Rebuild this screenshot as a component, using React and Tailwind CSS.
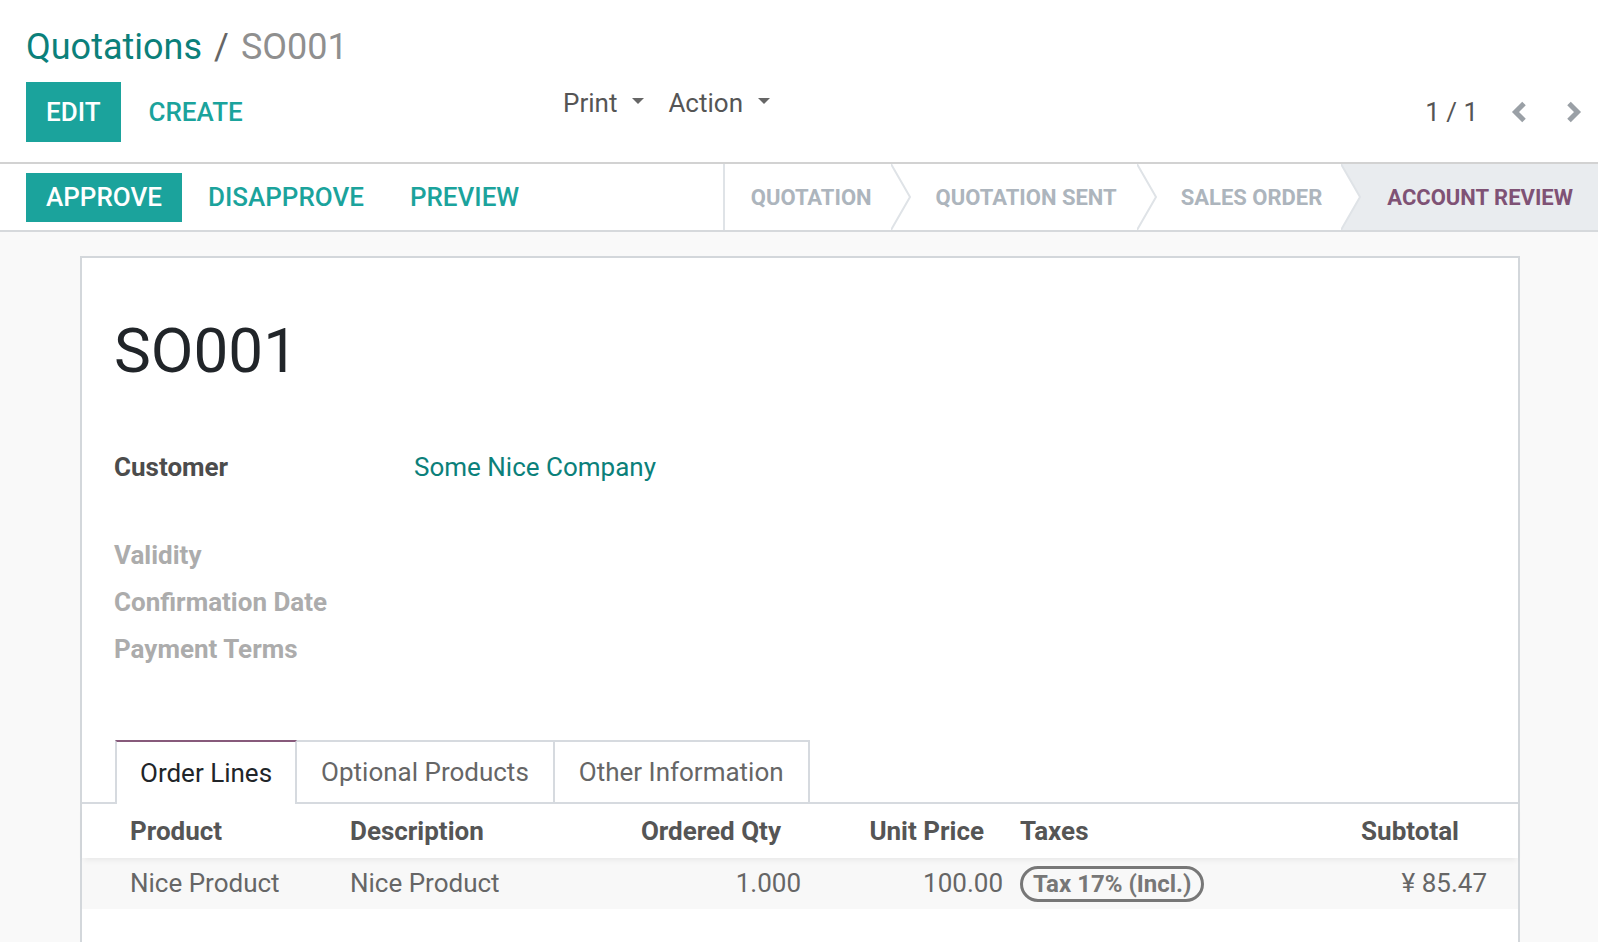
import React from "react";

function Caret() {
  return (
    <svg width="12" height="6" viewBox="0 0 12 6" className="mb-[5px]">
      <polygon points="0,0 12,0 6,6" fill="#666" />
    </svg>
  );
}

function ChevronLeft() {
  return (
    <svg width="16" height="22" viewBox="0 0 16 22">
      <polyline points="13,2.5 4.5,11 13,19.5" fill="none" stroke="#9aa0a6" strokeWidth="5" strokeLinejoin="miter" />
    </svg>
  );
}

function ChevronRight() {
  return (
    <svg width="16" height="22" viewBox="0 0 16 22">
      <polyline points="3,2.5 11.5,11 3,19.5" fill="none" stroke="#9aa0a6" strokeWidth="5" strokeLinejoin="miter" />
    </svg>
  );
}

function Arrow() {
  return (
    <svg
      className="absolute left-full top-0 z-10 h-full w-[20px]"
      viewBox="0 0 20 66"
      preserveAspectRatio="none"
    >
      <polygon points="0,0 19,33 0,66" fill="#ffffff" />
      <polyline points="0,0 19,33 0,66" fill="none" stroke="#dfe3e7" strokeWidth="2" />
    </svg>
  );
}

export default function App() {
  return (
    <div className="h-[942px] overflow-hidden bg-[#f9f9f9] font-[family-name:Roboto,_sans-serif]">
      {/* Control panel */}
      <div className="bg-white border-b-2 border-[#d2d2d2] pl-[26px] pr-[16px] pt-[26px] pb-[20px]">
        <div className="h-[42px] leading-[42px] text-[36px] whitespace-nowrap">
          <span className="text-[#0b807a]">Quotations</span>
          <span className="text-[#666666] px-[12px]">/</span>
          <span className="text-[#8f8f8f]">SO001</span>
        </div>
        <div className="mt-[14px] h-[60px] flex items-start">
          <div className="w-[537px] flex gap-2">
            <button className="h-[60px] px-5 bg-[#1ba39c] text-white text-[26px] font-medium">EDIT</button>
            <button className="h-[60px] px-5 text-[#1ba39c] text-[26px] font-medium">CREATE</button>
          </div>
          <div className="mt-[6px] h-[30px] flex items-center text-[26px] leading-[30px] text-[#555555]">
            <span>Print</span>
            <span className="ml-[15px] flex items-center"><Caret /></span>
            <span className="ml-[24px]">Action</span>
            <span className="ml-[15px] flex items-center"><Caret /></span>
          </div>
          <div className="ml-auto h-[60px] flex items-center">
            <span className="text-[26px] text-[#555555] whitespace-nowrap">1 / 1</span>
            <span className="ml-[33px] flex"><ChevronLeft /></span>
            <span className="ml-[39px] flex"><ChevronRight /></span>
          </div>
        </div>
      </div>

      {/* Status bar */}
      <div className="bg-white border-b-2 border-[#d6d9dc] h-[68px] flex">
        <div className="pl-[26px] flex items-center gap-[6px]">
          <button className="h-[49px] px-5 bg-[#1ba39c] text-white text-[26px] font-medium">APPROVE</button>
          <button className="h-[49px] px-5 text-[#1ba39c] text-[26px] font-medium">DISAPPROVE</button>
          <button className="h-[49px] px-5 text-[#1ba39c] text-[26px] font-medium">PREVIEW</button>
        </div>
        <div className="ml-auto flex h-full text-[22px] font-bold whitespace-nowrap">
          <div className="relative flex items-center border-l-2 border-[#dfe3e7] pl-[26px] pr-[19px] text-[#adb5bd]">
            QUOTATION
            <Arrow />
          </div>
          <div className="relative flex items-center pl-[45px] pr-[20px] text-[#adb5bd]">
            QUOTATION SENT
            <Arrow />
          </div>
          <div className="relative flex items-center pl-[44px] pr-[19px] text-[#adb5bd]">
            SALES ORDER
            <Arrow />
          </div>
          <div className="relative flex items-center bg-[#e9ecef] pl-[46px] pr-[25px] text-[#7f5275]">
            ACCOUNT REVIEW
          </div>
        </div>
      </div>

      {/* Content */}
      <div className="pt-[24px]">
        <div className="ml-[80px] w-[1440px] min-h-[800px] bg-white border-2 border-[#d3d7db]">
          <div className="px-[32px] pt-[55px]">
            <div className="h-[76px] leading-[76px] text-[62px] text-[#212529]">SO001</div>
            <div className="mt-[55px] flex text-[26px] leading-[47px]">
              <div className="w-[300px] font-bold text-[#4c4c4c]">Customer</div>
              <div className="text-[#0b807a]">Some Nice Company</div>
            </div>
            <div className="mt-[41px] text-[26px] leading-[47px] font-bold text-[#acacac]">
              <div>Validity</div>
              <div>Confirmation Date</div>
              <div>Payment Terms</div>
            </div>
          </div>

          {/* Tabs */}
          <div className="mt-[67px] flex pl-[33px] border-b-2 border-[#d6dadf] text-[26px]">
            <div className="relative z-10 -mb-[2px] h-[64px] bg-white border-t-2 border-t-[#875a7b] border-x-2 border-x-[#d6dadf] px-[23px] leading-[62px] text-[#212529]">
              Order Lines
            </div>
            <div className="h-[62px] border-t-2 border-r-2 border-[#d6dadf] px-[24px] leading-[60px] text-[#666666]">
              Optional Products
            </div>
            <div className="h-[62px] border-t-2 border-r-2 border-[#d6dadf] px-[24px] leading-[60px] text-[#666666]">
              Other Information
            </div>
          </div>

          {/* Table */}
          <div className="text-[26px]">
            <div className="relative z-10 grid grid-cols-[260px_258px_209px_202px_289px_218px] h-[54px] leading-[54px] font-bold text-[#555555] bg-white shadow-[0_4px_6px_-2px_rgba(0,0,0,0.07)]">
              <div className="pl-[48px] pr-[8px]">Product</div>
              <div className="px-[8px]">Description</div>
              <div className="pr-[28px] text-right">Ordered Qty</div>
              <div className="pr-[27px] text-right">Unit Price</div>
              <div className="pl-[9px]">Taxes</div>
              <div className="pr-[59px] text-right">Subtotal</div>
            </div>
            <div className="grid grid-cols-[260px_258px_209px_202px_289px_218px] h-[51px] leading-[51px] bg-[#f8f8f8] text-[#666666]">
              <div className="pl-[48px] pr-[8px]">Nice Product</div>
              <div className="px-[8px]">Nice Product</div>
              <div className="pr-[8px] text-right">1.000</div>
              <div className="pr-[8px] text-right">100.00</div>
              <div className="pl-[9px] flex items-center">
                <span className="inline-flex h-[36px] items-center rounded-full border-[3px] border-[#777777] px-[10px] text-[24px] leading-none font-bold text-[#777777] whitespace-nowrap">
                  Tax 17% (Incl.)
                </span>
              </div>
              <div className="pr-[31px] text-right">¥ 85.47</div>
            </div>
          </div>
        </div>
      </div>
    </div>
  );
}
